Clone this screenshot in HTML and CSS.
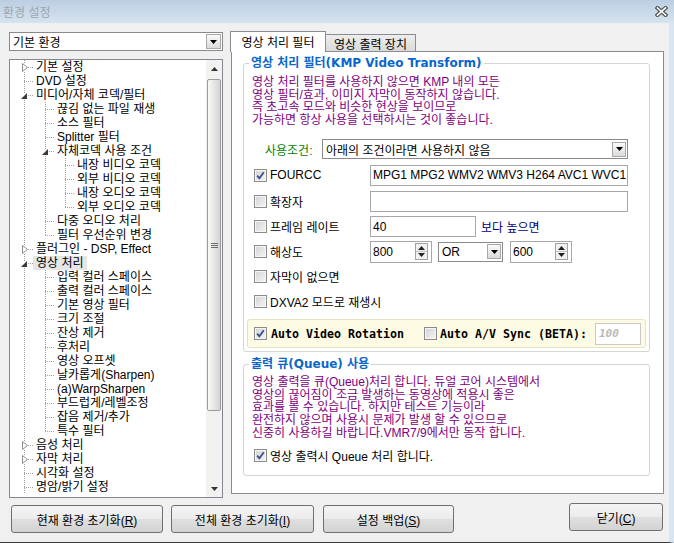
FILE: index.html
```html
<!DOCTYPE html>
<html lang="ko">
<head>
<meta charset="utf-8">
<title>환경 설정</title>
<link rel="stylesheet" href="styles.css">
</head>
<body>
<div class="window">
  <div class="titlebar">
    <span class="title">환경 설정</span>
    <svg class="close" width="13" height="11" viewBox="0 0 13 11"><path d="M2.5 2 L10.5 9 M10.5 2 L2.5 9" stroke="#555" stroke-width="4" stroke-linecap="square"/><path d="M2.5 2 L10.5 9 M10.5 2 L2.5 9" stroke="#fff" stroke-width="1.6" stroke-linecap="square"/></svg>
  </div>
  <div class="main">
    <div class="cols">
      <div class="left">
        <div class="combo top-combo"><span class="cv">기본 환경</span><span class="dd"><svg width="7" height="4" viewBox="0 0 7 4"><path d="M0 0 H7 L3.5 4 Z" fill="#000"/></svg></span></div>
        <div class="tree">
          <div class="tree-list">
            <div class="ti r0"><svg class="ex c" width="6" height="9" viewBox="0 0 6 9"><path d="M0.5 0.5 L5.5 4.5 L0.5 8.5 Z" fill="#fff" stroke="#8e8e8e"/></svg><span class="tx">기본 설정</span></div>
            <div class="ti r0"><span class="tx">DVD 설정</span></div>
            <div class="ti r0"><svg class="ex o" width="6" height="6" viewBox="0 0 6 6"><path d="M6 0 V6 H0 Z" fill="#3a3a3a"/></svg><span class="tx">미디어/자체 코덱/필터</span></div>
            <div class="ti r1"><span class="tx">끊김 없는 파일 재생</span></div>
            <div class="ti r1"><span class="tx">소스 필터</span></div>
            <div class="ti r1"><span class="tx">Splitter 필터</span></div>
            <div class="ti r1"><svg class="ex o l1" width="6" height="6" viewBox="0 0 6 6"><path d="M6 0 V6 H0 Z" fill="#3a3a3a"/></svg><span class="tx">자체코덱 사용 조건</span></div>
            <div class="ti r2"><span class="tx">내장 비디오 코덱</span></div>
            <div class="ti r2"><span class="tx">외부 비디오 코덱</span></div>
            <div class="ti r2"><span class="tx">내장 오디오 코덱</span></div>
            <div class="ti r2e"><span class="tx">외부 오디오 코덱</span></div>
            <div class="ti r1"><span class="tx">다중 오디오 처리</span></div>
            <div class="ti r1e"><span class="tx">필터 우선순위 변경</span></div>
            <div class="ti r0"><svg class="ex c" width="6" height="9" viewBox="0 0 6 9"><path d="M0.5 0.5 L5.5 4.5 L0.5 8.5 Z" fill="#fff" stroke="#8e8e8e"/></svg><span class="tx">플러그인 - DSP, Effect</span></div>
            <div class="ti r0"><svg class="ex o" width="6" height="6" viewBox="0 0 6 6"><path d="M6 0 V6 H0 Z" fill="#3a3a3a"/></svg><span class="tx sel">영상 처리</span></div>
            <div class="ti r1"><span class="tx">입력 컬러 스페이스</span></div>
            <div class="ti r1"><span class="tx">출력 컬러 스페이스</span></div>
            <div class="ti r1"><span class="tx">기본 영상 필터</span></div>
            <div class="ti r1"><span class="tx">크기 조절</span></div>
            <div class="ti r1"><span class="tx">잔상 제거</span></div>
            <div class="ti r1"><span class="tx">후처리</span></div>
            <div class="ti r1"><span class="tx">영상 오프셋</span></div>
            <div class="ti r1"><span class="tx">날카롭게(Sharpen)</span></div>
            <div class="ti r1"><span class="tx">(a)WarpSharpen</span></div>
            <div class="ti r1"><span class="tx">부드럽게/레벨조정</span></div>
            <div class="ti r1"><span class="tx">잡음 제거/추가</span></div>
            <div class="ti r1e"><span class="tx">특수 필터</span></div>
            <div class="ti r0"><svg class="ex c" width="6" height="9" viewBox="0 0 6 9"><path d="M0.5 0.5 L5.5 4.5 L0.5 8.5 Z" fill="#fff" stroke="#8e8e8e"/></svg><span class="tx">음성 처리</span></div>
            <div class="ti r0"><svg class="ex c" width="6" height="9" viewBox="0 0 6 9"><path d="M0.5 0.5 L5.5 4.5 L0.5 8.5 Z" fill="#fff" stroke="#8e8e8e"/></svg><span class="tx">자막 처리</span></div>
            <div class="ti r0"><span class="tx">시각화 설정</span></div>
            <div class="ti r0"><span class="tx">명암/밝기 설정</span></div>
          </div>
          <div class="vscroll">
            <div class="sb-btn"><svg width="7" height="4" viewBox="0 0 7 4"><path d="M3.5 0 L7 4 H0 Z" fill="#333"/></svg></div>
            <div class="sb-track">
              <div class="sb-thumb"><svg width="7" height="5" viewBox="0 0 7 5"><path d="M0 0.5 H7 M0 2.5 H7 M0 4.5 H7" stroke="#6d6d6d" stroke-width="1"/></svg></div>
            </div>
            <div class="sb-btn"><svg width="7" height="4" viewBox="0 0 7 4"><path d="M0 0 H7 L3.5 4 Z" fill="#333"/></svg></div>
          </div>
        </div>
      </div>
      <div class="right">
        <div class="tabs">
          <div class="tab active">영상 처리 필터</div>
          <div class="tab inactive">영상 출력 장치</div>
        </div>
        <div class="panel">
          <fieldset class="grp g1">
            <legend>영상 처리 필터(KMP Video Transform)</legend>
            <p class="note">영상 처리 필터를 사용하지 않으면 KMP 내의 모든<br>영상 필터/효과, 이미지 자막이 동작하지 않습니다.<br>즉 초고속 모드와 비슷한 현상을 보이므로<br>가능하면 항상 사용을 선택하시는 것이 좋습니다.</p>
            <div class="cond-row">
              <span class="cond-label">사용조건:</span>
              <div class="combo cond"><span class="cv">아래의 조건이라면 사용하지 않음</span><span class="dd"><svg width="7" height="4" viewBox="0 0 7 4"><path d="M0 0 H7 L3.5 4 Z" fill="#000"/></svg></span></div>
            </div>
            <div class="frow h26 first">
              <label class="chk"><span class="cb"><svg width="11" height="11" viewBox="0 0 11 11"><path d="M2.2 5.6 L4.4 8.3 L8.8 2.2" fill="none" stroke="#3d4c8c" stroke-width="1.8"/></svg></span>FOURCC</label>
              <div class="tb wide">MPG1 MPG2 WMV2 WMV3 H264 AVC1 WVC1</div>
            </div>
            <div class="frow h26">
              <label class="chk"><span class="cb"></span>확장자</label>
              <div class="tb wide"></div>
            </div>
            <div class="frow">
              <label class="chk"><span class="cb"></span>프레임 레이트</label>
              <div class="tb fps">40</div>
              <span class="navy">보다 높으면</span>
            </div>
            <div class="frow">
              <label class="chk"><span class="cb"></span>해상도</label>
              <div class="spinbox"><span>800</span><svg width="13" height="17" viewBox="0 0 13 17"><rect x="0.5" y="0.5" width="12" height="16" fill="#f1f1f1" stroke="#a2a2a2"/><path d="M6.5 3 L10 7 H3 Z" fill="#222"/><path d="M1 8.5 H12" stroke="#c4c4c4"/><path d="M3 10 H10 L6.5 14 Z" fill="#222"/></svg></div>
              <div class="combo or"><span class="cv">OR</span><span class="dd"><svg width="7" height="4" viewBox="0 0 7 4"><path d="M0 0 H7 L3.5 4 Z" fill="#000"/></svg></span></div>
              <div class="spinbox sp2"><span>600</span><svg width="13" height="17" viewBox="0 0 13 17"><rect x="0.5" y="0.5" width="12" height="16" fill="#f1f1f1" stroke="#a2a2a2"/><path d="M6.5 3 L10 7 H3 Z" fill="#222"/><path d="M1 8.5 H12" stroke="#c4c4c4"/><path d="M3 10 H10 L6.5 14 Z" fill="#222"/></svg></div>
            </div>
            <div class="frow">
              <label class="chk"><span class="cb"></span>자막이 없으면</label>
            </div>
            <div class="frow">
              <label class="chk"><span class="cb"></span>DXVA2 모드로 재생시</label>
            </div>
            <div class="yellow">
              <span class="cb"><svg width="11" height="11" viewBox="0 0 11 11"><path d="M2.2 5.6 L4.4 8.3 L8.8 2.2" fill="none" stroke="#3d4c8c" stroke-width="1.8"/></svg></span>
              <span class="mono">Auto Video Rotation</span>
              <span class="cb cb2"></span>
              <span class="mono">Auto A/V Sync (BETA):</span>
              <div class="tb dis">100</div>
            </div>
          </fieldset>
          <fieldset class="grp g2">
            <legend>출력 큐(Queue) 사용</legend>
            <p class="note n2">영상 출력을 큐(Queue)처리 합니다. 듀얼 코어 시스템에서<br>영상의 끊어짐이 조금 발생하는 동영상에 적용시 좋은<br>효과를 볼 수 있습니다. 하지만 테스트 기능이라<br>완전하지 않으며 사용시 문제가 발생 할 수 있으므로<br>신중히 사용하길 바랍니다.VMR7/9에서만 동작 합니다.</p>
            <div class="frow q">
              <label class="chk wide-chk"><span class="cb"><svg width="11" height="11" viewBox="0 0 11 11"><path d="M2.2 5.6 L4.4 8.3 L8.8 2.2" fill="none" stroke="#3d4c8c" stroke-width="1.8"/></svg></span>영상 출력시 Queue 처리 합니다.</label>
            </div>
          </fieldset>
        </div>
      </div>
    </div>
    <div class="buttons">
      <button class="btn b1">현재 환경 초기화(<u>R</u>)</button>
      <button class="btn b2">전체 환경 초기화(<u>I</u>)</button>
      <button class="btn b3">설정 백업(<u>S</u>)</button>
      <button class="btn b4">닫기(<u>C</u>)</button>
    </div>
  </div>
</div>
</body>
</html>
```
FILE: styles.css
```css
:root {
  --dv: repeating-linear-gradient(to bottom, #a0a0a0 0 1px, transparent 1px 2px);
  --dh: repeating-linear-gradient(to right, #a0a0a0 0 1px, transparent 1px 2px);
}
* { box-sizing: border-box; }
html, body { margin: 0; padding: 0; }
body {
  width: 674px;
  height: 543px;
  overflow: hidden;
  font-family: "Liberation Sans", "Noto Sans CJK KR", sans-serif;
  font-size: 12px;
  color: #000;
  background: #f0f0f0;
}
.window { display: flex; flex-direction: column; height: 543px; }
.titlebar {
  flex: none;
  height: 23px;
  display: flex;
  align-items: center;
  padding-left: 3px;
  background: linear-gradient(#bbcee1, #d6e3ef);
}
.title { color: #9ba5af; }
.close { margin-left: auto; margin-right: 6px; }
.main {
  flex: 1;
  display: flex;
  flex-direction: column;
  padding: 8px 0 0 9px;
  border-right: 5px solid #d9e5f1;
  border-bottom: 1px solid #3a3a3a;
}
.cols { display: flex; align-items: flex-start; }
.left { width: 214px; margin-top: 1px; display: flex; flex-direction: column; gap: 8px; }
.right { margin-left: 7px; width: 434px; }

/* combos */
.combo {
  display: flex;
  align-items: center;
  border: 1px solid #8a8a8a;
  background: #fff;
  padding: 0 1px 0 3px;
  white-space: nowrap;
}
.combo .cv { flex: 1; }
.dd {
  width: 14px;
  height: 15px;
  border: 1px solid #a9a9a9;
  background: linear-gradient(#fbfbfb, #dadada);
  display: flex;
  align-items: center;
  justify-content: center;
}
.top-combo { height: 19px; }
.top-combo .dd { width: 15px; }

/* tree */
.tree {
  height: 439px;
  border: 1px solid #828790;
  background: #fff;
  display: flex;
}
.tree-list { flex: 1; overflow: hidden; }
.ti {
  position: relative;
  height: 14px;
  line-height: 14px;
  white-space: nowrap;
}
.tx { padding: 0 3px; display: inline-block; height: 14px; }
.tx.sel { background: #e6e6e6; }
.r0 {
  padding-left: 23px;
  background: var(--dh) 14px 7px / 10px 1px no-repeat, var(--dv) 14px 0 / 1px 100% no-repeat;
}
.r1, .r1e { padding-left: 44px; }
.r1 {
  background: var(--dh) 35px 7px / 10px 1px no-repeat, var(--dv) 35px 0 / 1px 100% no-repeat, var(--dv) 14px 0 / 1px 100% no-repeat;
}
.r1e {
  background: var(--dh) 35px 7px / 10px 1px no-repeat, var(--dv) 35px 0 / 1px 8px no-repeat, var(--dv) 14px 0 / 1px 100% no-repeat;
}
.r2, .r2e { padding-left: 64px; }
.r2 {
  background: var(--dh) 55px 7px / 10px 1px no-repeat, var(--dv) 55px 0 / 1px 100% no-repeat, var(--dv) 35px 0 / 1px 100% no-repeat, var(--dv) 14px 0 / 1px 100% no-repeat;
}
.r2e {
  background: var(--dh) 55px 7px / 10px 1px no-repeat, var(--dv) 55px 0 / 1px 8px no-repeat, var(--dv) 35px 0 / 1px 100% no-repeat, var(--dv) 14px 0 / 1px 100% no-repeat;
}
.ex { position: absolute; }
.ex.c { left: 12px; top: 3px; background: #fff; }
.ex.o { left: 11px; top: 5px; background: #fff; }
.ex.o.l1 { left: 32px; }

.vscroll {
  width: 16px;
  display: flex;
  flex-direction: column;
  background: #f2f2f2;
}
.sb-btn { height: 17px; display: flex; align-items: center; justify-content: center; }
.sb-track { flex: 1; padding: 2px 1px 0; }
.sb-thumb {
  height: 332px;
  border: 1px solid #9b9b9b;
  border-radius: 2px;
  background: linear-gradient(to right, #f8f8f8, #e8e8e8 45%, #d3d3d3);
  display: flex;
  align-items: center;
  justify-content: center;
}

/* tabs */
.tabs {
  display: flex;
  align-items: flex-end;
  height: 20px;
  position: relative;
  z-index: 1;
}
.tab {
  display: flex;
  align-items: center;
  justify-content: center;
  border: 1px solid #898c95;
  border-bottom: none;
  white-space: nowrap;
}
.tab.active { width: 96px; height: 21px; margin-bottom: -1px; background: #fff; padding-bottom: 1px; }
.tab.inactive { width: 90px; height: 17px; border-left: none; background: linear-gradient(#ededed, #dadada); }

.panel {
  margin-left: 1px;
  width: 433px;
  height: 443px;
  border: 1px solid #898c95;
  background: #fff;
  padding: 4px 13px 0 11px;
}

/* group boxes */
.grp {
  margin: 0;
  min-inline-size: 0;
  border: 1px solid #d5d5d5;
  border-radius: 3px;
  padding: 6px 3px 3px;
}
.grp legend {
  padding: 0 2px;
  margin-left: 2px;
  font-family: "DejaVu Sans", "Noto Sans CJK KR", sans-serif;
  font-weight: bold;
  color: #0a66cc;
  line-height: 14px;
  white-space: nowrap;
}
.g2 { margin-top: 5px; padding: 5px 3px 9px; }
.note {
  margin: 0;
  padding-left: 5px;
  color: #800080;
  line-height: 12.5px;
  white-space: nowrap;
}
.note.n2 { line-height: 12.7px; }
.cond-row {
  margin-top: 13px;
  height: 20px;
  display: flex;
  align-items: center;
  padding-left: 18px;
}
.cond-label { color: #008000; width: 57px; white-space: nowrap; }
.combo.cond { width: 306px; height: 20px; }

.frow {
  display: flex;
  align-items: center;
  padding-left: 7px;
  height: 25px;
  white-space: nowrap;
}
.frow.h26 { height: 26px; }
.frow.first { margin-top: 3px; }
.frow.q { margin-top: 6px; height: 20px; }
.chk { display: flex; align-items: center; width: 116px; }
.chk.wide-chk { width: auto; }
.cb {
  flex: none;
  width: 13px;
  height: 13px;
  border: 1px solid #8c8c8c;
  box-shadow: inset 0 0 0 1px #f6f6f6;
  background: linear-gradient(135deg, #d2d2d2, #f6f6f6);
  display: inline-flex;
  align-items: center;
  justify-content: center;
  margin-right: 3px;
}
.tb {
  height: 21px;
  border: 1px solid #a7a7a7;
  background: #fff;
  padding-left: 2px;
  display: flex;
  align-items: center;
  white-space: nowrap;
  overflow: hidden;
}
.tb.wide { width: 258px; }
.tb.fps { width: 106px; }
.navy { color: #000080; margin-left: 5px; }
.spinbox {
  width: 62px;
  height: 22px;
  border: 1px solid #a7a7a7;
  background: #fff;
  padding: 0 3px 0 2px;
  display: flex;
  align-items: center;
  justify-content: space-between;
}
.combo.or { width: 65px; height: 20px; margin-left: 6px; }
.spinbox.sp2 { margin-left: 7px; }

.yellow {
  margin-top: 5px;
  height: 29px;
  border: 1px solid #e6e2c6;
  border-radius: 3px;
  background: #fefbe4;
  display: flex;
  align-items: center;
  padding-left: 6px;
  white-space: nowrap;
}
.yellow .cb { margin-right: 4px; }
.yellow .cb2 { margin-left: 20px; margin-right: 3px; }
.mono {
  font-family: "DejaVu Sans Mono", "Liberation Mono", monospace;
  font-weight: bold;
  font-size: 11.63px;
}
.tb.dis {
  width: 46px;
  height: 22px;
  margin-left: 8px;
  border-color: #c9c9c9;
  color: #b8b8b8;
  font-family: "DejaVu Sans Mono", "Liberation Mono", monospace;
  font-weight: bold;
  font-style: italic;
  font-size: 11px;
  padding-left: 3px;
}

/* buttons */
.buttons {
  display: flex;
  align-items: flex-start;
  margin-top: 5px;
  padding-left: 2px;
}
.btn {
  height: 28px;
  margin: 2px 0 0;
  padding: 0;
  border: 1px solid #707070;
  border-radius: 3px;
  background: linear-gradient(#f4f4f4 0%, #ececec 48%, #dfdfdf 52%, #d3d3d3 100%);
  font-family: "Liberation Sans", "Noto Sans CJK KR", sans-serif;
  font-size: 12px;
  color: #000;
  white-space: nowrap;
}
.b1 { width: 152px; }
.b2 { width: 143px; margin-left: 8px; }
.b3 { width: 131px; margin-left: 9px; }
.b4 { width: 94px; margin-top: 0; margin-left: auto; margin-right: 6px; }
```
